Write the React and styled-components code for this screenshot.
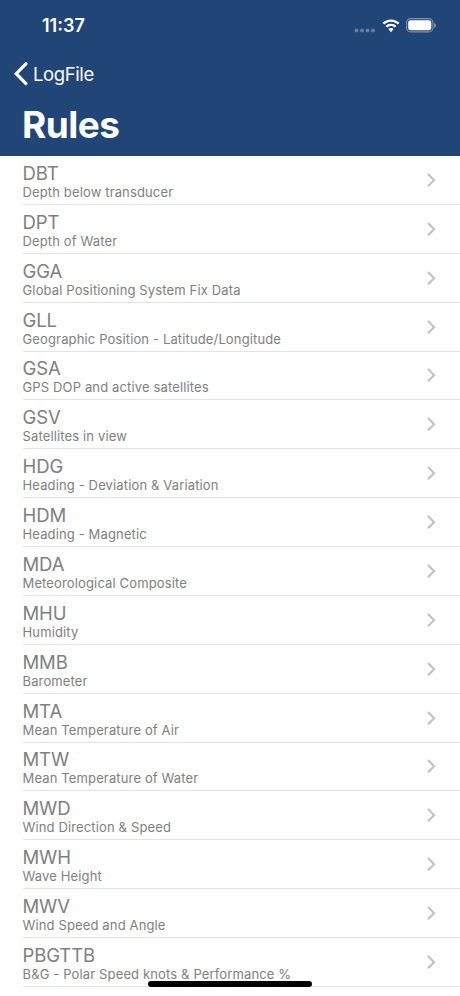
import React from 'react';
import styled, { createGlobalStyle } from 'styled-components';

const ColorNavy = '#224578';
const ColorText = '#808080';
const ColorLine = '#e4e4e5';

const rules = [
  { code: 'DBT', description: 'Depth below transducer' },
  { code: 'DPT', description: 'Depth of Water' },
  { code: 'GGA', description: 'Global Positioning System Fix Data' },
  { code: 'GLL', description: 'Geographic Position - Latitude/Longitude' },
  { code: 'GSA', description: 'GPS DOP and active satellites' },
  { code: 'GSV', description: 'Satellites in view' },
  { code: 'HDG', description: 'Heading - Deviation & Variation' },
  { code: 'HDM', description: 'Heading - Magnetic' },
  { code: 'MDA', description: 'Meteorological Composite' },
  { code: 'MHU', description: 'Humidity' },
  { code: 'MMB', description: 'Barometer' },
  { code: 'MTA', description: 'Mean Temperature of Air' },
  { code: 'MTW', description: 'Mean Temperature of Water' },
  { code: 'MWD', description: 'Wind Direction & Speed' },
  { code: 'MWH', description: 'Wave Height' },
  { code: 'MWV', description: 'Wind Speed and Angle' },
  { code: 'PBGTTB', description: 'B&G - Polar Speed knots & Performance %' },
];

const SignalDots = () => (
  <svg width="22" height="5" viewBox="0 0 22 5" fill="#fff" fillOpacity="0.3">
    <circle cx="2.5" cy="2.5" r="2" />
    <circle cx="8" cy="2.5" r="2" />
    <circle cx="13.5" cy="2.5" r="2" />
    <circle cx="19" cy="2.5" r="2" />
  </svg>
);

const Wifi = () => (
  <svg width="18" height="14" viewBox="0 0 18 14" fill="#fff">
    <path d="M9 0.4C12.3 0.4 15.3 1.7 17.5 3.8L15.8 5.6C14 3.9 11.6 2.8 9 2.8S4 3.9 2.2 5.6L0.5 3.8C2.7 1.7 5.7 0.4 9 0.4Z" />
    <path d="M9 4.8C11.1 4.8 13 5.6 14.4 6.9L12.7 8.6C11.7 7.7 10.4 7.1 9 7.1S6.3 7.7 5.3 8.6L3.6 6.9C5 5.6 6.9 4.8 9 4.8Z" />
    <path d="M9 9C10 9 10.9 9.4 11.6 10L9 13.2L6.4 10C7.1 9.4 8 9 9 9Z" />
  </svg>
);

const Battery = () => (
  <svg width="31" height="15" viewBox="0 0 31 15">
    <rect x="0.6" y="0.6" width="26.3" height="13.3" rx="4" fill="none" stroke="#fff" strokeOpacity="0.42" strokeWidth="1.1" />
    <rect x="2.2" y="2.2" width="23.1" height="10.1" rx="2.4" fill="#fff" />
    <path d="M28.2 5V9.8C29.2 9.4 29.8 8.4 29.8 7.4S29.2 5.4 28.2 5Z" fill="#fff" fillOpacity="0.5" />
  </svg>
);

const BackChevron = () => (
  <svg width="15" height="24" viewBox="0 0 15 24" fill="none" stroke="#fff" strokeWidth="3.2" strokeLinecap="round" strokeLinejoin="miter">
    <path d="M12.9 1.8L3.2 11.7L12.9 21.6" />
  </svg>
);

const RowChevron = () => (
  <svg width="9" height="14" viewBox="0 0 9 14" fill="none" stroke="#c2c2c5" strokeWidth="2.1">
    <path d="M1 1.1L7.1 7.2L1 13.3" />
  </svg>
);

class RuleList extends React.Component {
  render() {
    return (
      <List>
        {this.props.rules.map(rule => (
          <Row key={rule.code}>
            <RowText>
              <Code>{rule.code}</Code>
              <Description>{rule.description}</Description>
            </RowText>
            <RowChevron />
          </Row>
        ))}
      </List>
    );
  }
}

const App = () => (
  <Screen>
    <GlobalStyle />
    <Header>
      <StatusBar>
        <Clock>11:37</Clock>
        <StatusIcons>
          <SignalDots />
          <Wifi />
          <Battery />
        </StatusIcons>
      </StatusBar>
      <BackLink>
        <BackChevron />
        <span>LogFile</span>
      </BackLink>
      <Title>Rules</Title>
    </Header>
    <RuleList rules={rules} />
    <HomeIndicator />
  </Screen>
);

export default App;

const GlobalStyle = createGlobalStyle`
  body {
    margin: 0;
    background-color: #fff;
    font-family: Inter, "Liberation Sans", sans-serif;
  }
  svg {
    display: block;
    flex: none;
  }
`;

const Screen = styled.div`
  position: relative;
  height: 996px;
  overflow: hidden;
  background-color: #fff;
`;

const Header = styled.header`
  box-sizing: border-box;
  height: 156px;
  background-color: ${ColorNavy};
  color: #fff;
`;

const StatusBar = styled.div`
  display: flex;
  align-items: center;
  justify-content: space-between;
  height: 51px;
  padding: 0 23px 0 42px;
`;

const Clock = styled.div`
  font-size: 18px;
  font-weight: 600;
  letter-spacing: 0;
`;

const StatusIcons = styled.div`
  display: flex;
  align-items: center;
  gap: 6px;
  svg:first-child {
    margin-top: 9px;
  }
`;

const BackLink = styled.a`
  display: flex;
  align-items: center;
  gap: 5px;
  height: 46px;
  padding-left: 13px;
  font-size: 18.5px;
  letter-spacing: -0.4px;
`;

const Title = styled.h1`
  margin: 0;
  padding: 5px 0 0 22px;
  font-size: 37px;
  font-weight: 700;
  line-height: 46px;
  letter-spacing: -0.55px;
`;

const List = styled.ul`
  margin: 0;
  padding: 0 0 0 22.5px;
  list-style: none;
`;

const Row = styled.li`
  box-sizing: border-box;
  display: flex;
  align-items: center;
  justify-content: space-between;
  height: 48.88px;
  padding-right: 24px;
  border-bottom: 1px solid ${ColorLine};
`;

const RowText = styled.div`
  display: flex;
  flex-direction: column;
  padding-top: 2px;
  color: ${ColorText};
  white-space: nowrap;
`;

const Code = styled.span`
  font-size: 18.5px;
  line-height: 22px;
  letter-spacing: -0.1px;
`;

const Description = styled.span`
  font-size: 13px;
  line-height: 16px;
  letter-spacing: 0.14px;
`;

// sits over the last row of the list
const HomeIndicator = styled.div`
  position: absolute;
  left: 148px;
  bottom: 9px;
  width: 164px;
  height: 6px;
  border-radius: 3px;
  background-color: #000;
`;
